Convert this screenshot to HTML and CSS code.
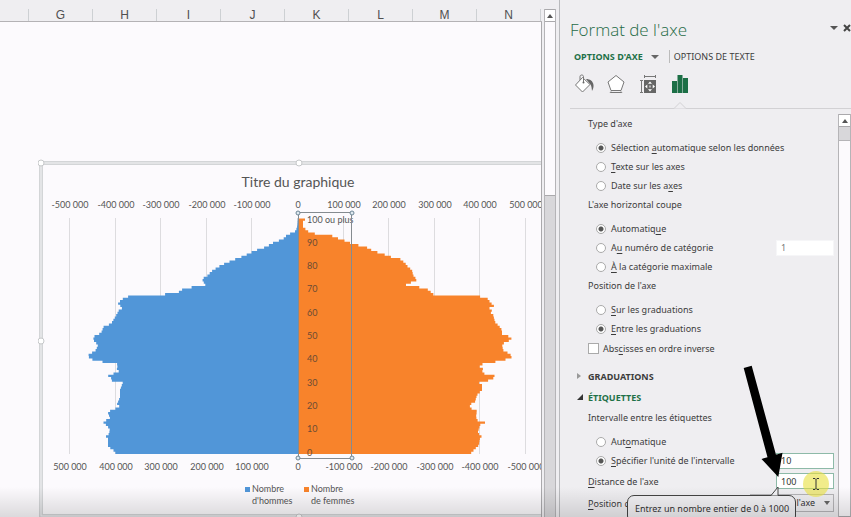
FILE: index.html
```html
<!DOCTYPE html>
<html lang="fr">
<head>
<meta charset="utf-8">
<title>Format de l'axe</title>
<link rel="stylesheet" href="styles.css">
</head>
<body>
<main class="sheet">
  <div class="columns">
    <span class="col col-first"></span><span class="col">G</span><span class="col">H</span><span class="col">I</span><span class="col">J</span><span class="col">K</span><span class="col">L</span><span class="col">M</span><span class="col">N</span>
  </div>
  <div class="cells">
    <svg class="chart" width="520" height="360" viewBox="38 158 520 360" role="img" aria-label="Titre du graphique">
      <rect class="frame" x="41" y="163" width="515" height="353"/>
      <rect class="frame-inner" x="41" y="163" width="515" height="353"/>
      <g class="grid" id="grid"></g>
      <text class="title" x="298" y="187">Titre du graphique</text>
      <g class="labels" id="top-axis"></g>
      <path class="men" id="men"/>
      <path class="women" id="women"/>
      <g class="ages" id="ages"></g>
      <g class="labels" id="bottom-axis"></g>
      <g class="selection">
        <rect x="298.500" y="212.500" width="53" height="246"/>
        <circle cx="298" cy="213" r="2"/><circle cx="352" cy="213" r="2"/>
        <circle cx="298" cy="458" r="2"/><circle cx="352" cy="458" r="2"/>
      </g>
      <rect class="men" x="245" y="487" width="5" height="5"/>
      <rect class="women" x="304" y="487" width="5" height="5"/>
      <g class="legend">
        <text x="252" y="492">Nombre</text><text x="252" y="504">d'hommes</text>
        <text x="311" y="492">Nombre</text><text x="311" y="504">de femmes</text>
      </g>
      <g class="handles">
        <circle cx="41" cy="163" r="3"/><circle cx="299" cy="163" r="3"/><circle cx="41" cy="341" r="3"/><circle cx="299" cy="517" r="3"/>
      </g>
    </svg>
  </div>
</main>
<div class="gutter">
  <div class="bar"><button class="bar-up" aria-label="Défiler vers le haut"></button><div class="bar-thumb"></div></div>
</div>
<aside class="panel">
  <header class="head">
    <h1>Format de l'axe</h1>
    <button class="down" aria-label="Options du volet"></button>
    <button class="close" aria-label="Fermer"><svg width="8" height="8" viewBox="0 0 8 8"><path d="M1 1l6 6M7 1L1 7"/></svg></button>
  </header>
  <nav class="tabs">
    <button class="tab tab-on">OPTIONS D'AXE<i></i></button><button class="tab">OPTIONS DE TEXTE</button>
  </nav>
  <div class="icons">
    <button aria-label="Remplissage"><svg width="20" height="20" viewBox="0 0 20 20"><path class="shape" d="M8.500 3.500L16 10.500 8.500 18 1.500 11z"/><path class="line" d="M6 6V2.500C6 .5 9.500 .5 9.500 2.500V8"/><circle class="dark" cx="9.500" cy="8.500" r="1"/><path class="dark" d="M12 5c4 0 7 2 7.500 6 .2 2-.3 4-1.500 6-.3-3-.5-5-1.500-6.500z"/></svg></button>
    <button aria-label="Effets"><svg width="20" height="20" viewBox="0 0 20 20"><path class="shape" d="M10 1.500L18 8 15 16.500H5L2 8z"/><path class="line" d="M5 17.500l-1 1.500M15 17.500l1 1.500M5 18.500h10"/></svg></button>
    <button aria-label="Taille"><svg width="20" height="20" viewBox="0 0 20 20"><path class="line" d="M6.500 2.500h11M6.500 1v3M17.500 1v3M3.500 6v12M2 6.500h3M2 18.500h3"/><path class="dark" d="M6 6h12v13H6z"/><path class="light" d="M12 7.500l2 2.300h-4zM12 17.500l2-2.300h-4zM7 12.500l2.300-2v4zM17 12.500l-2.300-2v4zM11.500 11.500h1v2h-1z"/></svg></button>
    <button aria-label="Options d'axe" class="icon-on"><svg width="20" height="20" viewBox="0 0 20 20"><path class="green" d="M2 7h5v12H2zM7.500 1h5v18h-5zM13 4h5v15h-5z"/></svg></button>
  </div>
  <div class="rule"><svg width="14" height="8" viewBox="0 0 14 8"><path d="M1 7.500L7 1.500 13 7.500"/></svg></div>
  <div class="body">
    <form class="options">
      <div class="label">Type d'axe</div>
      <label class="choice"><input type="radio" name="type" checked><span>Sélection <u>a</u>utomatique selon les données</span></label>
      <label class="choice"><input type="radio" name="type"><span><u>T</u>exte sur les axes</span></label>
      <label class="choice"><input type="radio" name="type"><span>Date sur les a<u>x</u>es</span></label>
      <div class="label">L'axe horizontal coupe</div>
      <label class="choice"><input type="radio" name="cross" checked><span>Automatiq<u>u</u>e</span></label>
      <div class="field"><label class="choice"><input type="radio" name="cross"><span>A<u>u</u> numéro de catégorie</span></label><input class="box box-off" aria-label="Numéro de catégorie" value="1" disabled></div>
      <label class="choice"><input type="radio" name="cross"><span><u>À</u> la catégorie maximale</span></label>
      <div class="label">Position de l'axe</div>
      <label class="choice"><input type="radio" name="place"><span><u>S</u>ur les graduations</span></label>
      <label class="choice"><input type="radio" name="place" checked><span><u>E</u>ntre les graduations</span></label>
      <label class="choice check"><input type="checkbox"><span>Abs<u>c</u>isses en ordre inverse</span></label>
      <button type="button" class="section section-shut">GRADUATIONS</button>
      <button type="button" class="section section-open">ÉTIQUETTES</button>
      <div class="label">Intervalle entre les étiquettes</div>
      <label class="choice"><input type="radio" name="step"><span>Aut<u>o</u>matique</span></label>
      <div class="field"><label class="choice"><input type="radio" name="step" checked><span><u>S</u>pécifier l'unité de l'intervalle</span></label><input class="box" aria-label="Unité de l'intervalle" value="10"></div>
      <div class="field field-tall"><label for="distance"><u>D</u>istance de l'axe</label><input class="box" id="distance" value="100">
        <svg class="marks" width="100" height="140" viewBox="740 360 100 140"><circle class="glow" cx="816" cy="484" r="13"/><path class="beam" d="M813 478.500h2l1 1 1-1h2M816 479.500v9M813 489.500h2l1-1 1 1h2"/><path class="arrow" d="M743.700 368l8-2.300L776 454.700l6.500-2L778.300 477 761.500 459l6-1.700z"/></svg>
      </div>
      <div class="field field-tall"><label for="position"><u>P</u>osition de l'étiquette</label><select class="box pick" id="position"><option>À côté de l'axe</option></select>
        <div class="tip">Entrez un nombre entier de 0 à 1000<svg width="14" height="10" viewBox="0 0 14 10"><path class="tail" d="M0 9.500L7 1v8.500"/></svg></div>
      </div>
    </form>
    <div class="bar bar-panel"><button class="bar-up" aria-label="Défiler vers le haut"></button><div class="bar-gap"></div><div class="bar-thumb"></div></div>
  </div>
</aside>
<script src="chart.js"></script>
</body>
</html>
```
FILE: styles.css
```css
* { box-sizing: border-box; }
body {
  margin: 0;
  height: 100vh;
  display: flex;
  overflow: hidden;
  position: relative;
  background: #efeef1;
  color: #3c3c3c;
  font: 9px/19px "Noto Sans", "Open Sans", sans-serif;
}
body::after {
  content: "";
  position: absolute;
  inset: auto 0 0;
  height: 30px;
  background: linear-gradient(rgba(0, 0, 0, 0), rgba(0, 0, 0, .13));
  pointer-events: none;
}
button { margin: 0; padding: 0; border: 0; background: none; color: inherit; font: inherit; }
svg { display: block; }

.sheet { flex: 1; min-width: 0; display: flex; flex-direction: column; }
.columns {
  height: 22px;
  padding-top: 9px;
  display: flex;
  overflow: hidden;
  border-bottom: 1px solid #b4b2b5;
  font: 12px/12px "Liberation Sans", sans-serif;
  color: #505050;
}
.col { flex: 0 0 64px; border-right: 1px solid #cdd0d3; text-align: center; }
.col-first { flex-basis: 29px; }
.cells { flex: 1; overflow: hidden; padding: 136px 0 0 38px; background: #fcfafd; border-right: 1px solid #aaa9ac; }

.chart { font-family: Lato, sans-serif; fill: #555; }
.frame { fill: none; stroke: #d3d5d7; stroke-width: 4; }
.frame-inner { fill: none; stroke: #f4f4f6; stroke-width: 1; }
.grid { stroke: #dddcdf; }
.title { font-size: 14px; text-anchor: middle; }
.labels { font-size: 9px; text-anchor: middle; }
.legend, .ages { font-size: 9px; }
.ages { fill: #6b4c35; }
.ages .outside { fill: #555; }
.men { fill: #5196d8; }
.women { fill: #f8832b; }
.selection rect { fill: none; stroke: #858b90; }
.selection circle { fill: #dfe9f0; stroke: #6d8596; }
.handles circle { fill: #fff; stroke: #c6c8ca; }

.gutter { flex: 0 0 18px; padding: 9px 3px 0 2px; border-right: 1px solid #b9babd; display: flex; }
.bar { flex: 1; display: flex; flex-direction: column; background: #d8d7da; border: solid #b5b4b7; border-width: 0 1px; }
.bar-up { height: 13px; background: #fff; border: solid #aaa9ac; border-width: 1px 0; display: grid; place-items: center; }
.bar-up::before { content: ""; border: solid transparent; border-width: 0 3px 4px; border-bottom-color: #555; }
.bar-thumb { height: 174px; background: #fcfafd; border-bottom: 1px solid #aaa9ac; }

.panel { flex: 0 0 291px; display: flex; flex-direction: column; }
.head { display: flex; align-items: center; height: 44px; padding: 16px 0 0 10px; }
h1 { flex: 1; margin: 0; font: 300 17px/28px "Open Sans", sans-serif; color: #1f6b46; }
.down { border: solid transparent; border-width: 4px 4px 0; border-top-color: #555; margin: 0 5px 5px 0; }
.close { margin-bottom: 5px; }
.close path { stroke: #444; stroke-width: 2; }
.tabs { display: flex; align-items: center; height: 25px; padding-left: 14px; }
.tab { line-height: 13px; display: flex; align-items: center; padding-left: 4px; border-left: 1px solid #bbb; }
.tab-on { padding: 0 10px 0 0; border: 0; color: #1f7148; font-weight: 700; }
.tab-on i { margin-left: 8px; border: solid transparent; border-width: 4px 4px 0; border-top-color: #666; }
.icons { display: flex; gap: 12px; padding: 5px 0 0 14px; }
.shape { fill: #fff; stroke: #777; }
.line { fill: none; stroke: #777; }
.dark { fill: #666; }
.light { fill: #fff; }
.green { fill: #1c6f46; }
.rule { margin-left: 10px; padding-left: 103px; height: 15px; display: flex; align-items: flex-end; border-bottom: 1px solid #d2d1d4; }
.rule svg { margin-bottom: -1px; fill: #efeef1; stroke: #d2d1d4; }

.body { flex: 1; min-height: 0; display: flex; padding-top: 5px; }
.options { flex: 1; padding: 0 4px 0 28px; min-width: 0; }
.label, .choice { height: 19px; }
.label + .choice { margin-top: 5px; }
.choice { display: flex; align-items: center; gap: 5px; padding-left: 8px; }
.choice input { appearance: none; margin: 0; width: 10px; height: 10px; border: 1px solid #aaa; border-radius: 50%; background: #fff; }
.choice input[type=radio]:checked { background: radial-gradient(circle, #555 2px, #fff 3px); }
.check { padding-left: 0; height: 21px; gap: 4px; }
.choice input[type=checkbox] { border-radius: 0; width: 11px; height: 11px; }
u { text-decoration-thickness: 1px; text-underline-offset: 2px; }
.field { display: flex; align-items: center; justify-content: space-between; position: relative; height: 19px; }
.label + .field { margin-top: 5px; }
.field-tall { height: 22px; }
.box { width: 58px; height: 16px; padding: 0 4px; border: 1px solid #8dbaa8; background: #fff; color: #333; font: inherit; line-height: 14px; }
.box-off { border-color: #f6f6f8; color: #777; }
.pick { appearance: none; width: 84px; height: 18px; border-color: #b5b4b7; background: #efeef1; }
.field:has(.pick)::before { content: ""; position: absolute; right: 4px; top: 9px; border: solid transparent; border-width: 4px 3px 0; border-top-color: #666; }
.section { position: relative; display: block; height: 21px; line-height: 21px; font-weight: 700; }
.section-shut { margin-top: 7px; }
.section-open { color: #1f7148; }
.section::before { content: ""; position: absolute; left: -11px; top: 7px; }
.section-shut::before { border: solid transparent; border-width: 3px 0 3px 4px; border-left-color: #999; }
.section-open::before { border: solid transparent; border-width: 0 0 6px 6px; border-bottom-color: #333; }
.marks { position: absolute; right: -6px; bottom: -8px; z-index: 2; }
.glow { fill: #e8e03c; fill-opacity: .6; }
.beam { fill: none; stroke: #333; }
.arrow { fill: #000; }
.tip { position: absolute; left: 39px; top: 3px; width: 169px; height: 28px; padding: 3px 7px; white-space: nowrap; background: #f3f2f5; border: 1px solid #444; border-radius: 7px; color: #333; }
.tip svg { position: absolute; right: 10px; top: -10px; }
.tail { fill: #f3f2f5; stroke: #444; }
.bar-panel { flex: 0 0 13px; }
.bar-gap { height: 14px; border-bottom: 1px solid #b5b4b7; }
.bar-panel .bar-thumb { flex: 1; }
```
FILE: chart.js
```javascript
// Outline of each side of the pyramid, as [y, x] from the oldest age down.
const men = [[218,298],[228,297],[233,294],[234,288],[239,283],[243,273],[247,266],[250,257],[253,250],[256,244],[259,236],[261,231],[264,224],[267,218],[271,212],[276,207],[279,202],[283,204],[286,206],[287,193],[289,183],[294,176],[295,137],[297,126],[300,121],[305,117],[307,124],[310,119],[314,117],[319,114],[324,111],[326,104],[333,101],[337,93],[341,94],[345,98],[350,96],[356,87],[360,93],[362,103],[363,114],[365,119],[368,116],[371,119],[373,116],[375,107],[378,111],[381,112],[382,123],[390,120],[397,120],[404,117],[407,120],[410,111],[413,108],[418,110],[422,103],[427,108],[430,110],[436,108],[437,104],[438,108],[447,108],[449,112],[452,115],[454,116]];
const women = [[218,305],[220,305],[221,303],[227,303],[232,309],[234,316],[235,330],[238,337],[240,343],[243,350],[245,357],[247,366],[251,373],[254,383],[257,391],[259,400],[263,405],[267,408],[270,412],[275,413],[280,417],[283,410],[284,406],[286,406],[287,418],[289,427],[293,432],[295,434],[296,477],[298,487],[302,490],[306,494],[307,487],[310,493],[312,489],[314,493],[322,495],[326,499],[330,502],[334,502],[336,508],[339,512],[342,507],[344,502],[350,503],[354,510],[357,512],[359,508],[362,495],[364,483],[366,479],[369,483],[373,482],[376,495],[380,492],[382,478],[385,482],[390,482],[395,477],[402,475],[405,469],[409,472],[411,477],[417,476],[421,478],[422,486],[425,480],[432,478],[436,480],[437,483],[438,480],[445,479],[449,475],[453,471],[454,471]];
const TOP = 218.5, BOTTOM = 454, AGES = 101, ZERO = 298;

function at(points, y) {
  const i = Math.max(1, points.findIndex(p => p[0] >= y));
  const [a, b] = [points[i - 1], points[i]];
  return a[1] + (b[1] - a[1]) * (y - a[0]) / (b[0] - a[0]);
}
function steps(points) {
  const h = (BOTTOM - TOP) / AGES;
  let d = `M${ZERO} ${TOP}`;
  for (let i = 0; i < AGES; i++) d += `H${at(points, TOP + h * (i + .5)).toFixed(1)}V${(TOP + h * (i + 1)).toFixed(1)}`;
  return d + `H${ZERO}Z`;
}
document.getElementById('men').setAttribute('d', steps(men));
document.getElementById('women').setAttribute('d', steps(women));

const fmt = n => (n < 0 ? '-' : '') + (n ? Math.abs(n) + '00 000' : '0');
let grid = '', top_ = '', bottom = '', ages = '';
for (let n = -5; n <= 5; n++) {
  const x = Math.round(ZERO + n * 45.6);
  grid += `<path d="M${x - .5} 218V454"/>`;
  top_ += `<text x="${x}" y="208">${fmt(n)}</text>`;
  bottom += `<text x="${x}" y="470">${fmt(-n)}</text>`;
}
for (let a = 0; a <= 100; a += 10) {
  ages += `<text x="307" y="${Math.round(455.5 - a * 2.33)}"${a === 100 ? ' class="outside"' : ''}>${a === 100 ? '100 ou plus' : a}</text>`;
}
document.getElementById('grid').innerHTML = grid;
document.getElementById('top-axis').innerHTML = top_;
document.getElementById('bottom-axis').innerHTML = bottom;
document.getElementById('ages').innerHTML = ages;
```
